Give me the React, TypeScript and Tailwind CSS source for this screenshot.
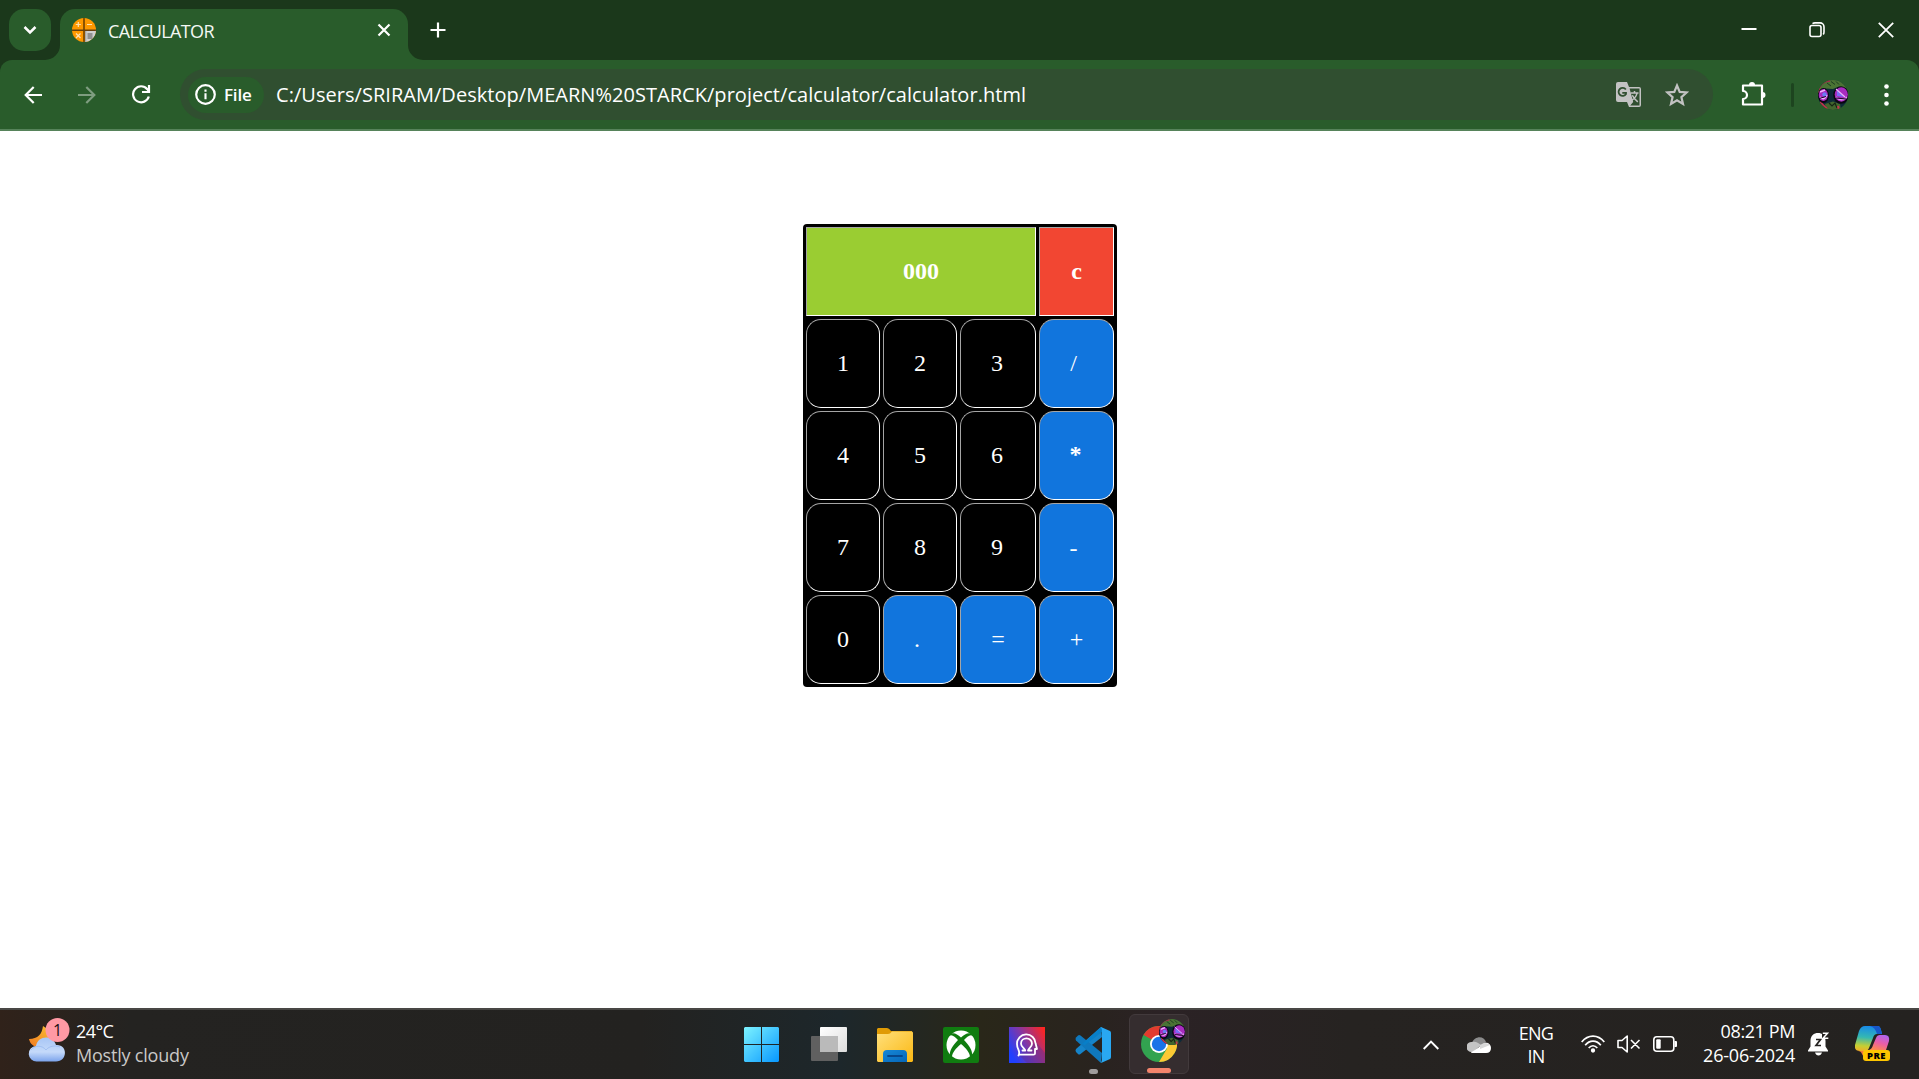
import React from 'react';

const UI = "font-['Open_Sans','Noto_Sans',sans-serif]";

type CellProps = { label: string; tone?: 'key' | 'op' | 'screen' | 'clear'; shift?: string; bold?: boolean };

const tones = {
  key: 'bg-black rounded-[15px]',
  op: 'bg-[#1175dd] rounded-[15px]',
  screen: 'bg-[#9acd32] col-span-3 font-bold',
  clear: 'bg-[#f24632] font-bold',
};

function Cell({ label, tone = 'key', shift = 'pb-0.5', bold = false }: CellProps) {
  return (
    <button
      className={`flex items-center justify-center border border-t-[#a5a5a5] border-l-[#a5a5a5] border-r-white border-b-white text-2xl leading-none text-white ${tones[tone]} ${shift} ${bold ? 'font-bold' : ''}`}
    >
      {label}
    </button>
  );
}

function Calculator() {
  return (
    <div className="grid h-[463px] w-[314px] grid-cols-[74px_74px_76px_75px] grid-rows-[repeat(5,89px)] gap-[3px] rounded-[4px] bg-black p-[3px] font-['Liberation_Serif',serif]">
      <Cell label="000" tone="screen" />
      <Cell label="c" tone="clear" />
      <Cell label="1" />
      <Cell label="2" />
      <Cell label="3" shift="pr-0.5 pb-0.5" />
      <Cell label="/" tone="op" shift="pr-[6px] pb-0.5" />
      <Cell label="4" />
      <Cell label="5" />
      <Cell label="6" shift="pr-0.5 pb-0.5" />
      <Cell label="*" tone="op" bold shift="pr-0.5 pb-[3px]" />
      <Cell label="7" />
      <Cell label="8" />
      <Cell label="9" shift="pr-0.5 pb-0.5" />
      <Cell label="-" tone="op" shift="pr-1.5" />
      <Cell label="0" />
      <Cell label="." tone="op" shift="pr-1.5 pb-0.5" />
      <Cell label="=" tone="op" />
      <Cell label="+" tone="op" />
    </div>
  );
}

function Avatar({ id, className }: { id: string; className: string }) {
  return (
    <svg viewBox="0 0 30 30" className={className}>
      <defs>
        <clipPath id={id}><circle cx="15" cy="15" r="15" /></clipPath>
      </defs>
      <g clipPath={`url(#${id})`}>
        <rect width="30" height="30" fill="#0d2a38" />
        <path d="M0 0h30v9L21 6.500 15 9 7 8.500 0 13z" fill="#4a7434" />
        <path d="M0 13C1 5 6 1 12 .8" stroke="#a52a4c" strokeWidth="2" fill="none" />
        <path d="M9 3l4 3M13 1.500l4 3M18 1.500l3 3" stroke="#1c3a20" strokeWidth="1" />
        <path d="M7 24l8-2.500 7 2.500 1 6H8z" fill="#41662d" />
        <path d="M11 23l3 3 3-3 2 5" stroke="#152413" strokeWidth="1.200" fill="none" />
        <path d="M2 22l7 7M20 26l1 4" stroke="#c2344c" strokeWidth="2" />
        <ellipse cx="5.500" cy="15.500" rx="5.500" ry="7.500" fill="#0b0611" />
        <ellipse cx="5.300" cy="15" rx="4.600" ry="6" fill="#a929be" />
        <path d="M2 12l5-2M2 17c3 3 5 2 7-2" stroke="#f0b4fb" strokeWidth="1.400" fill="none" />
        <circle cx="6.500" cy="14.500" r="2.200" fill="#6b7cf4" />
        <path d="M1 18.500l7-2" stroke="#180a25" />
        <ellipse cx="23" cy="15" rx="7.800" ry="8.800" fill="#0b0611" />
        <ellipse cx="23.300" cy="14.500" rx="6.600" ry="7.200" fill="#a82cc0" />
        <path d="M18 17c4 4 8 3 11 0" stroke="#e893f8" strokeWidth="1.300" fill="none" />
        <path d="M19 10l8 7-8-1z" fill="#7b6df5" />
        <path d="M18 9l9 8" stroke="#efb4fb" strokeWidth="1.100" />
        <path d="M18 18l10 1" stroke="#180a25" strokeWidth="1.200" />
      </g>
    </svg>
  );
}

function Favicon() {
  return (
    <svg viewBox="0 0 24 24" className="ml-3 size-6">
      <defs><clipPath id="fav"><circle cx="12" cy="12" r="12" /></clipPath></defs>
      <g clipPath="url(#fav)">
        <rect width="24" height="24" fill="#ff9800" />
        <path d="M12 12h12v12H12z" fill="#cfcfcf" />
        <path d="M11 0h2v24h-2z" fill="#8c5200" />
        <path d="M0 11.400h24v1.600H0z" fill="#68400d" />
        <path d="M13 13h1.300V24H13z" fill="#a7a7a7" />
      </g>
      <path d="M6.300 4v5M3.800 6.500h5M15 6.500h5M4 15.500l4.500 4.500M8.500 15.500L4 20" stroke="#ffe1b0" strokeWidth="1.200" />
      <path d="M15.500 16h5M15.500 18h5M15.500 20h5" stroke="#555" />
    </svg>
  );
}

function TabStrip() {
  return (
    <div className="flex h-[60px] bg-[#1b381b]">
      <button className="mt-[9px] ml-[9px] flex size-[42px] items-center justify-center rounded-[15px] bg-[#295c2b]">
        <svg viewBox="0 0 14 10" className="h-2.5 w-3.5"><path d="M1.500 2l5.500 5.500L12.500 2" stroke="#fff" strokeWidth="2.500" fill="none" /></svg>
      </button>
      <svg viewBox="0 0 15 15" className="-ml-1.5 size-[15px] self-end"><path d="M15 0v15H0A15 15 0 0 0 15 0z" fill="#295c2b" /></svg>
      <div className="mt-[9px] flex w-[348px] items-center rounded-t-[15px] bg-[#295c2b] pb-[9px]">
        <Favicon />
        <span className="ml-3 pt-0.5 text-[18px] leading-6 tracking-[-0.65px] text-[#f4f8f4]">CALCULATOR</span>
        <svg viewBox="0 0 14 14" className="mr-[17px] ml-auto size-[14px]"><path d="M1.500 1.500l11 11M12.500 1.500l-11 11" stroke="#fff" strokeWidth="2.200" /></svg>
      </div>
      <svg viewBox="0 0 15 15" className="size-[15px] self-end"><path d="M0 0v15h15A15 15 0 0 1 0 0z" fill="#295c2b" /></svg>
      <svg viewBox="0 0 16 16" className="mt-[22px] ml-[7px] size-4"><path d="M8 .5v15M.5 8h15" stroke="#fff" strokeWidth="2.200" /></svg>
      <svg viewBox="0 0 16 16" className="mt-[21px] ml-auto size-4"><path d="M.5 8h15" stroke="#fff" strokeWidth="2" /></svg>
      <svg viewBox="0 0 16 16" className="mt-[22px] ml-[52px] size-4" fill="none" stroke="#fff" strokeWidth="1.600">
        <rect x="1" y="3.500" width="11" height="11" rx="2" />
        <path d="M3.500 1.600Q4.500 .9 6 .9h5a4 4 0 0 1 4 4v5q0 1.500-.8 2.500" />
      </svg>
      <svg viewBox="0 0 16 16" className="mt-[22px] mr-[25px] ml-[53px] size-4"><path d="M.8 .8l14.400 14.400M15.200 .8L.8 15.200" stroke="#fff" strokeWidth="1.800" /></svg>
    </div>
  );
}

function Toolbar() {
  return (
    <div className="h-[71px] bg-[#1b381b]">
      <div className="flex h-[71px] items-center rounded-t-[12px] border-b-2 border-[#56835a] bg-[#295c2b]">
        <svg viewBox="0 0 18 18" className="ml-6 size-[18px]" fill="none" stroke="#fff" strokeWidth="2.200"><path d="M18 9H2M9.700 1L1.700 9l8 8" /></svg>
        <svg viewBox="0 0 18 18" className="ml-9 size-[18px]" fill="none" stroke="#7f9d80" strokeWidth="2.200"><path d="M0 9h16M8.300 1l8 8-8 8" /></svg>
        <svg viewBox="0 0 19 19" className="ml-9 size-[19px]" fill="none" stroke="#fff" strokeWidth="2.200">
          <path d="M16.800 11.500A8 8 0 1 1 15.300 4.200L17 6.500" />
          <path d="M17 0v7h-7" />
        </svg>
        <div className="ml-[29px] flex h-[51px] w-[1533px] items-center rounded-full bg-[#304f30] pl-2">
          <div className="flex h-9 w-[76px] items-center rounded-full bg-[#295c2b] pl-[7px] text-white">
            <svg viewBox="0 0 21 21" className="size-[21px]">
              <circle cx="10.500" cy="10.500" r="9.300" fill="none" stroke="#fff" strokeWidth="2.200" />
              <path d="M10.500 9.300v6M10.500 5.500v2.300" stroke="#fff" strokeWidth="2.100" />
            </svg>
            <span className="ml-2 text-[17px] leading-6 font-semibold tracking-[-0.2px]">File</span>
          </div>
          <span className="ml-3 text-[20px] leading-7 tracking-[0.035px] whitespace-nowrap text-white">
            C:/Users/SRIRAM/Desktop/MEARN%20STARCK/project/calculator/calculator.html
          </span>
          <svg viewBox="0 0 25 25" className="ml-auto size-[25px]">
            <path d="M2 0h9l2 5h10a2 2 0 0 1 2 2v16a2 2 0 0 1-2 2H13l-2-5H2a2 2 0 0 1-2-2V2a2 2 0 0 1 2-2z" fill="#c2c2c2" />
            <path d="M13.600 6.500h9.900v17h-9.300l3-3.600z" fill="#304f30" />
            <path d="M9.800 7.500A4 4 0 1 0 10 12v-1.200H6.300" fill="none" stroke="#304f30" strokeWidth="1.800" />
            <path d="M14.500 11h8M18.500 9v2M21 11c-.5 3.500-3 6-5.500 7.500M16.300 13.300c1 2.500 3 4.500 5.500 6.500" fill="none" stroke="#c2c2c2" strokeWidth="1.500" />
          </svg>
          <svg viewBox="0 0 24 24" className="mr-6 ml-[24px] size-6" fill="none" stroke="#c2c2c2" strokeWidth="2.200">
            <path d="M12 2.500l2.700 6.400 6.900.6-5.200 4.600 1.600 6.900-6-3.700-6 3.700 1.600-6.900-5.200-4.600 6.900-.6z" />
          </svg>
        </div>
        <svg viewBox="0 0 25 25" className="mb-0.5 ml-[28px] size-[25px]">
          <path d="M2 4.500h19v19H2V18a3.800 3.800 0 0 0 0-8z" fill="none" stroke="#fff" strokeWidth="2.200" strokeLinejoin="round" />
          <path d="M8 4a3 3 0 0 1 6 0zM21.500 11a3 3 0 0 1 0 6z" fill="#fff" />
        </svg>
        <div className="ml-[25px] h-6 w-[3px] rounded bg-[#1d441f]" />
        <Avatar id="profile" className="ml-6 size-[30px]" />
        <svg viewBox="0 0 5 22" className="ml-9 h-[22px] w-[5px]" fill="#fff">
          <circle cx="2.500" cy="2.500" r="2.300" /><circle cx="2.500" cy="11" r="2.300" /><circle cx="2.500" cy="19.500" r="2.300" />
        </svg>
      </div>
    </div>
  );
}

function WeatherIcon() {
  return (
    <svg viewBox="0 0 42 46" className="ml-[28px] h-[46px] w-[42px]">
      <defs>
        <linearGradient id="moon" x1="0" y1="1" x2="1" y2="0"><stop stopColor="#f27a22" /><stop offset="1" stopColor="#f9c732" /></linearGradient>
        <linearGradient id="cl" x1="0" y1="0" x2="0" y2="1"><stop stopColor="#a8c6f6" /><stop offset=".6" stopColor="#c5dafa" /><stop offset="1" stopColor="#7ca4ec" /></linearGradient>
      </defs>
      <path d="M15 8c-1 8-5 13-14 13 2 9 11 10 19 4l8-8z" fill="url(#moon)" />
      <path d="M9 43.500a7.500 7.500 0 1 1-1-15.500c2-11 17-11 20-1 12-1 12 16.500 0 16.500z" fill="url(#cl)" />
      <path d="M3 32c4-5 11-5 15 0 3-4 9-5 14-3" fill="none" stroke="#8fb0ed" strokeWidth="1" opacity=".6" />
      <circle cx="29.500" cy="12" r="12" fill="#ff99a4" />
    </svg>
  );
}

function WindowsIcon() {
  return (
    <svg viewBox="0 0 35 35" className="size-[35px]">
      <defs><linearGradient id="win" gradientUnits="userSpaceOnUse" x1="0" y1="0" x2="35" y2="35"><stop stopColor="#7df3ff" /><stop offset="1" stopColor="#0797ff" /></linearGradient></defs>
      <path d="M1 0h16v17H0V1zM18 0h16l1 1v16H18zM0 18h17v17H1l-1-1zM18 18h17v16l-1 1H18z" fill="url(#win)" />
    </svg>
  );
}

function TaskViewIcon() {
  return (
    <svg viewBox="0 0 36 35" className="ml-8 h-[35px] w-9">
      <defs><linearGradient id="tv" x1="0" y1="0" x2="1" y2="1"><stop stopColor="#fff" /><stop offset="1" stopColor="#ddd" /></linearGradient></defs>
      <rect x="0" y="9" width="27" height="25" rx="1" fill="#606060" />
      <rect x="9" width="27" height="25" rx="1" fill="url(#tv)" />
      <path d="M9 9h18v16H9z" fill="#bababa" />
    </svg>
  );
}

function FolderIcon() {
  return (
    <svg viewBox="0 0 36 34" className="ml-[30px] h-[34px] w-9">
      <defs>
        <linearGradient id="fo" x1="0" y1="0" x2="1" y2="1"><stop stopColor="#ffe07c" /><stop offset="1" stopColor="#fbb813" /></linearGradient>
        <linearGradient id="fb" x1="0" y1="0" x2="1" y2="1"><stop stopColor="#1687d7" /><stop offset="1" stopColor="#0667b9" /></linearGradient>
      </defs>
      <path d="M1 0h9q2 0 4 3h21v14H0V1z" fill="#e09b05" />
      <path d="M0 6h11q2 0 4-2.500h20l1 1V33l-1 1H1l-1-1z" fill="url(#fo)" />
      <path d="M6 34V26q0-4 4-4h16q4 0 4 4v8z" fill="url(#fb)" />
      <path d="M11 28h14" stroke="#07478c" strokeWidth="1.800" strokeLinecap="round" />
    </svg>
  );
}

function XboxIcon() {
  return (
    <svg viewBox="0 0 36 36" className="ml-[30px] size-9">
      <rect width="36" height="36" rx="2" fill="#107c10" />
      <circle cx="18" cy="18" r="14.500" fill="#fff" />
      <path d="M7 7c4-2 7 0 11 3.500C22 7 25 5 29 7l1 2c-3-2-6 1-9 4 5 5 9 11 8 16l-2 1c0-4-4-9-9-13-5 4-9 9-9 13l-2-1c-1-5 3-11 8-16-3-3-6-6-9-4z" fill="#107c10" />
    </svg>
  );
}

function HeadIcon() {
  return (
    <svg viewBox="0 0 36 36" className="ml-[30px] size-9">
      <defs><linearGradient id="hd" x1="0" y1=".65" x2="1" y2=".1"><stop stopColor="#2040ff" /><stop offset=".45" stopColor="#8037a7" /><stop offset="1" stopColor="#ff251f" /></linearGradient></defs>
      <rect width="36" height="36" fill="url(#hd)" />
      <path d="M10 28l8 8h18V26L27 15z" fill="#5c2d91" opacity=".4" />
      <g fill="none" stroke="#fff" strokeWidth="1.800" strokeLinejoin="round" strokeLinecap="round">
        <path d="M9.500 28.500c2.500-4.500-1.500-5.500-1.500-11.500a9.300 9.300 0 0 1 18.600-.5l1.400 5.500h-2v4.500q0 1.200-1.500 1.200H9.800" />
        <path d="M13.500 23.500h2.800c0-2-4.300-3.300-4.300-6.800 0-7 11-7 11 0 0 3.500-4 4.800-4 6.800h3.500" />
      </g>
    </svg>
  );
}

function CodeIcon() {
  return (
    <svg viewBox="0 0 36 36" className="size-9">
      <path d="M26 0L1 22q-1 1.500 0 3l2 2q1 1 2.500 0L27 10z" fill="#1684c9" />
      <path d="M26 36L1 13.500q-1-1.500 0-3l2-2q1-1 2.500 0L27 26z" fill="#0f78bd" />
      <path d="M10 18L27 5V.5L26 0 7 17z" fill="#087fc8" />
      <path d="M26 0l9 4q1 .5 1 2v24q0 1.500-1 2l-9 4 1-3V3z" fill="#29a8f2" />
    </svg>
  );
}

function ChromeIcon() {
  return (
    <svg viewBox="0 0 36 36" className="size-9">
      <circle cx="18" cy="18" r="18" fill="#32a350" />
      <path d="M18 18L2.400 9A18 18 0 0 1 33.600 9z" fill="#e33b2e" />
      <path d="M18 9h15.600A18 18 0 0 1 18 36l8-13.500z" fill="#fcc934" />
      <path d="M2.400 9l8 13.500L18 18z" fill="#32a350" />
      <circle cx="18" cy="18" r="9" fill="#fff" />
      <circle cx="18" cy="18" r="7.200" fill="#1a73e8" />
    </svg>
  );
}

function Tray() {
  return (
    <div className="flex h-full w-[496px] items-center text-[18px] text-white">
      <svg viewBox="0 0 16 10" className="h-2.5 w-4"><path d="M.7 9L8 1.500 15.300 9" fill="none" stroke="#fff" strokeWidth="1.900" /></svg>
      <svg viewBox="0 0 24 16" className="ml-7 h-4 w-6">
        <path d="M5 6C7-1 17-2 19 5l-6 6z" fill="#8c8c8c" />
        <path d="M4 15a5 5 0 0 1 1-10c4-1 6 1 9 3L5 16z" fill="#c4c4c4" />
        <path d="M4 15.500L16 7.500C18 4 24 6 24 11q0 5-5 5H5z" fill="#fff" />
        <path d="M13 8l4-2q5 0 6 2l-10 4z" fill="#d8d8d8" />
      </svg>
      <div className="ml-[27px] w-9 text-center leading-[23px] tracking-[-0.7px]"><div>ENG</div><div>IN</div></div>
      <svg viewBox="0 0 24 18" className="mb-0.5 ml-[27px] h-[18px] w-6" fill="none" stroke="#fff" strokeWidth="1.700">
        <path d="M.7 7C7-.8 17-.8 23.300 7M4.200 10.300C8.500 4.800 15.500 4.800 19.800 10.300M7.700 13c2.500-3 6.100-3 8.600 0" />
        <circle cx="12" cy="15.500" r="1.300" fill="#fff" />
      </svg>
      <svg viewBox="0 0 24 18" className="mb-0.5 ml-3 h-[18px] w-6" fill="none" stroke="#fff" strokeWidth="1.600">
        <path d="M1 5.500h4L10.200 1v16L5 12.500H1zM14 5l8.500 8.500M22.500 5L14 13.500" strokeLinejoin="round" />
      </svg>
      <svg viewBox="0 0 25 16" className="mb-0.5 ml-3 h-4 w-[25px]">
        <rect x=".8" y=".8" width="20" height="14.400" rx="3" fill="none" stroke="#fff" strokeWidth="1.600" />
        <rect x="3.200" y="3.200" width="4.500" height="9.600" rx="1" fill="#fff" />
        <path d="M21.500 5h1.500q1 0 1 1v4q0 1-1 1h-1.500z" fill="#fff" />
      </svg>
      <div className="mb-1 ml-[22px] flex w-[95px] flex-col items-end leading-6 whitespace-nowrap">
        <div className="tracking-[-0.4px]">08:21 PM</div>
        <div className="tracking-[-0.2px]">26-06-2024</div>
      </div>
      <svg viewBox="0 0 22 24" className="mb-0.5 ml-[13px] h-6 w-[22px]">
        <path d="M0 18.500l2.500-4V9C2.500 3.500 6 1 10 1s7.500 2.500 7.500 8v5.500l2.500 4v1H0zM7 20.500h7q-1 3-3.500 3T7 20.500z" fill="#fff" />
        <path d="M14 .5h6v6.500h-6z" fill="#242220" />
        <path d="M8 7.500H12.500L8 13.500H13" fill="none" stroke="#242220" strokeWidth="1.700" />
        <path d="M14.800 1.300H19.500l-4.500 5H20.300" fill="none" stroke="#fff" strokeWidth="1.500" />
      </svg>
      <div className="relative mb-0.5 ml-[25px] h-[35px] w-[35px]">
        <svg viewBox="0 0 35 35" className="size-[35px]">
          <defs>
            <linearGradient id="ca" x1=".4" y1="0" x2=".3" y2="1"><stop stopColor="#188ae8" /><stop offset=".45" stopColor="#34b8b2" /><stop offset=".8" stopColor="#c6cf32" /><stop offset="1" stopColor="#efb028" /></linearGradient>
            <linearGradient id="cb" x1=".7" y1="0" x2=".3" y2="1"><stop stopColor="#b065ed" /><stop offset=".5" stopColor="#ea5da7" /><stop offset="1" stopColor="#ff8a4c" /></linearGradient>
          </defs>
          <path d="M10 0h13q2 0 3 4l1 4h-5q-3 0-4 4l-4 10q-1 3-4 3H5q-6 0-5-6L4 5q2-5 6-5z" fill="url(#ca)" />
          <path d="M15 0h8q2 0 3 4l1 4h-5q-2-7-7-8z" fill="#1757c9" />
          <path d="M25 9h5q5 0 4 6l-3 9H14q3-1 4-5l3-7q1-3 4-3z" fill="url(#cb)" />
          <path d="M3 25h13l-2 6h-4q-2 0-3-3-1-3-4-3z" fill="#f47a3c" />
        </svg>
        <span className="absolute right-0 bottom-0 flex h-[11px] w-[27px] items-center justify-center rounded-[3px] bg-[#fdc500] text-[9.5px] leading-none font-extrabold tracking-[0.4px] text-black">PRE</span>
      </div>
    </div>
  );
}

function Taskbar() {
  return (
    <div className="flex h-[71px] items-center border-t-2 border-[#494745] bg-[linear-gradient(90deg,#30221a_0px,#242321_130px,#232220_640px,#1d272b_840px,#292719_980px,#29231f_1100px,#2b2225_1160px,#262321_1350px,#242220_1919px)]">
      <div className="relative mb-[7px] flex w-[744px] items-center">
        <WeatherIcon />
        <span className="absolute top-[5px] left-[53px] text-[16px] leading-5 text-[#201014]">1</span>
        <div className="ml-1.5 pt-1 text-[18px] leading-6 text-white">
          <div className="tracking-[-0.6px]">24°C</div>
          <div className="tracking-[-0.2px] text-[#c9c8c7]">Mostly cloudy</div>
        </div>
      </div>
      <WindowsIcon />
      <TaskViewIcon />
      <FolderIcon />
      <XboxIcon />
      <HeadIcon />
      <div className="relative ml-[30px]">
        <CodeIcon />
        <span className="absolute top-[42px] left-[14px] h-[5px] w-[9px] rounded-full bg-[#a09d9d]" />
      </div>
      <div className="relative mb-px ml-[18px] flex size-[60px] items-center justify-center rounded-md border border-[#423a3c] bg-[#352d2f]">
        <ChromeIcon />
        <Avatar id="badge" className="absolute top-1 right-[3px] size-[26px]" />
        <span className="absolute bottom-0 left-[17px] h-[5px] w-6 rounded-full bg-[#f4846c]" />
      </div>
      <div className="ml-[234px] h-full"><Tray /></div>
    </div>
  );
}

export default function App() {
  return (
    <div className={`flex h-[1079px] w-[1919px] flex-col overflow-hidden bg-white ${UI}`}>
      <TabStrip />
      <Toolbar />
      <main className="flex flex-1 items-start justify-center pt-[93px] pl-px">
        <Calculator />
      </main>
      <Taskbar />
    </div>
  );
}
